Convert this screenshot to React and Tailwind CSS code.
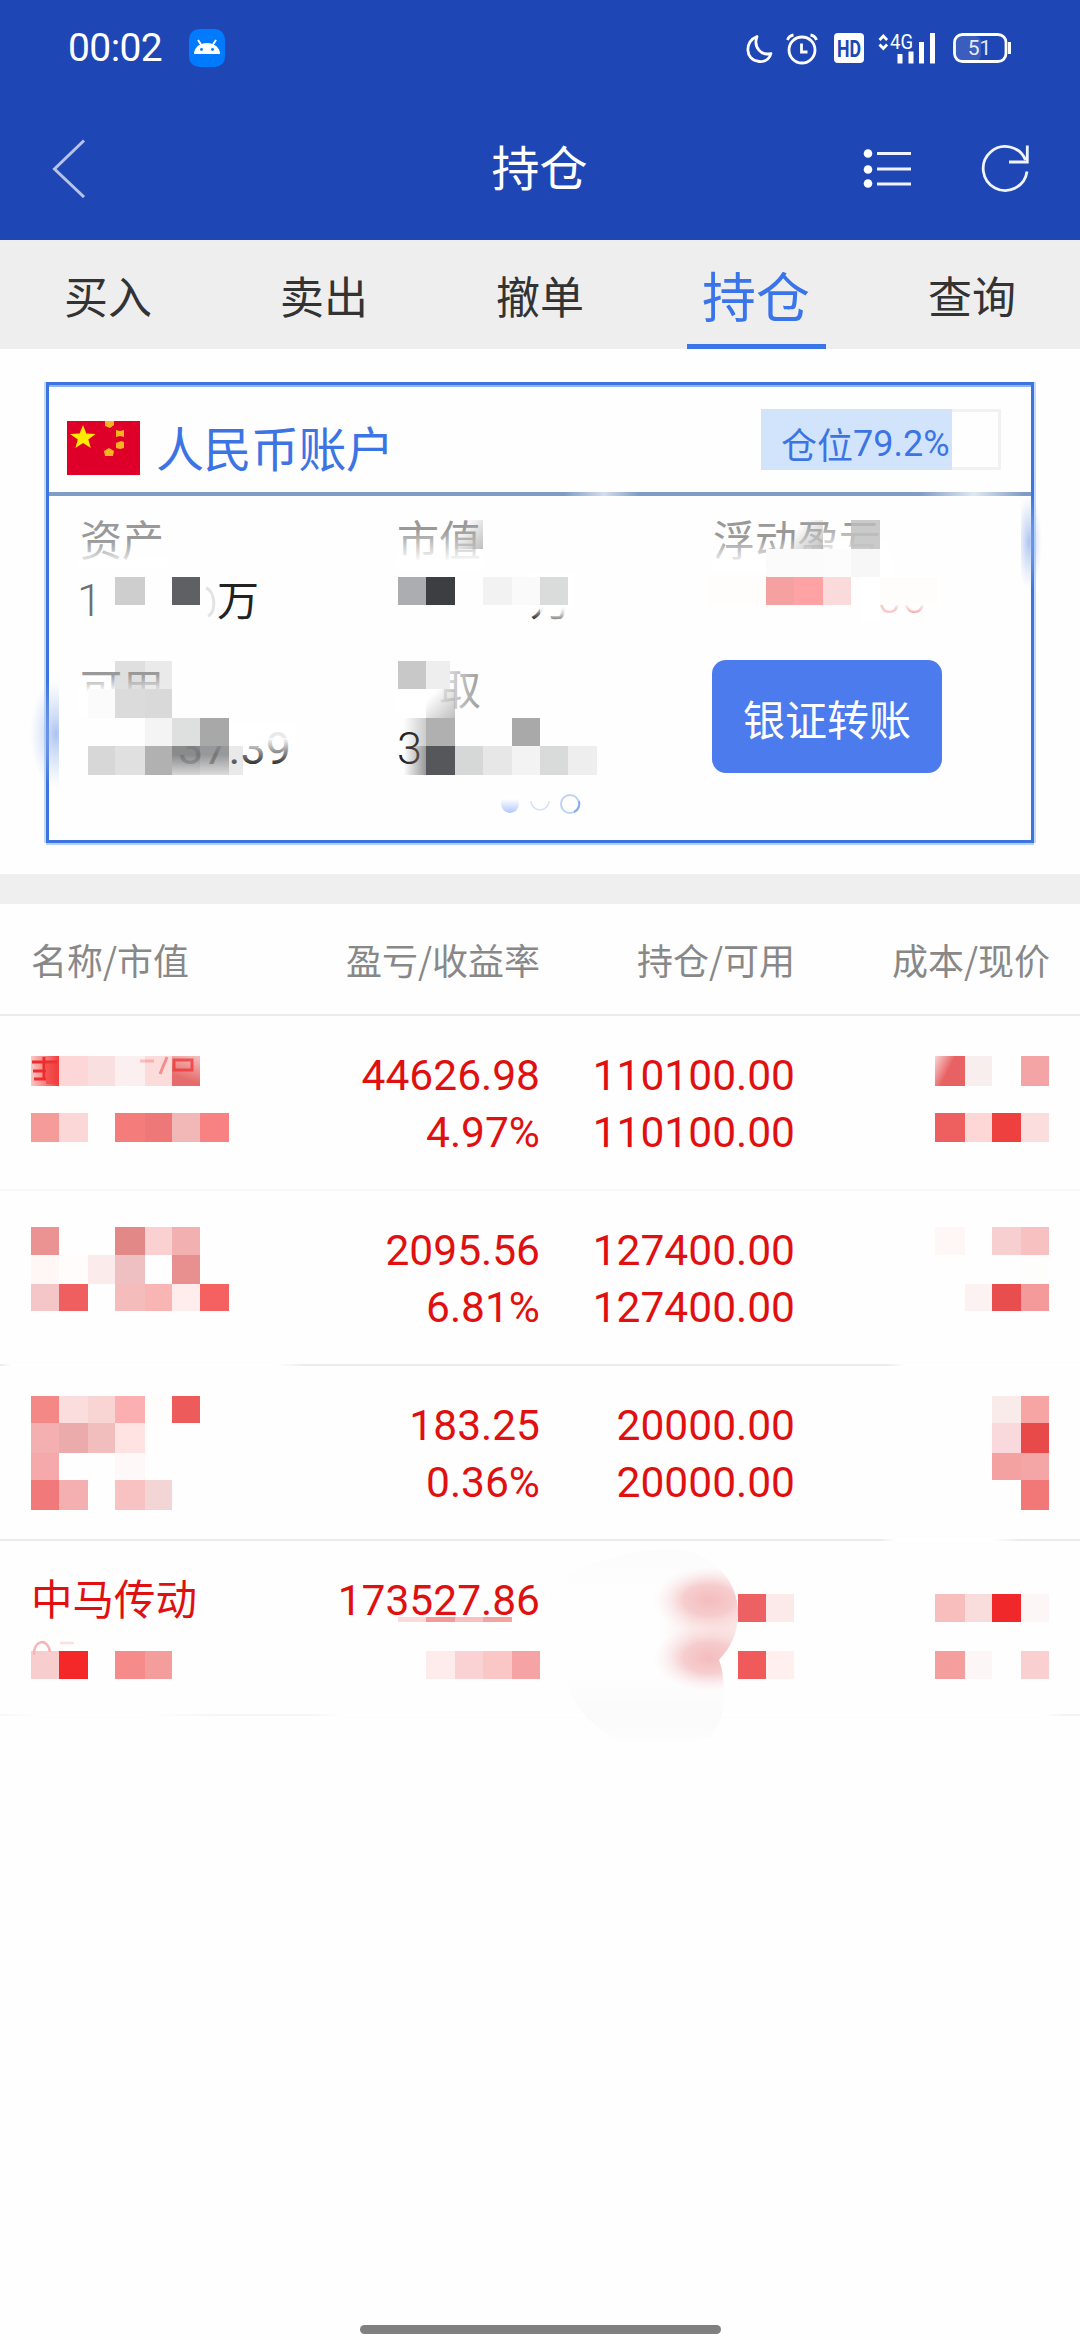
import React from 'react';

const tabs = ['买入', '卖出', '撤单', '持仓', '查询'];

const holdings = [
  { name: '', profit: '44626.98', rate: '4.97%', total: '110100.00', usable: '110100.00', line: 'bg-[#f8f8f8]' },
  { name: '', profit: '2095.56', rate: '6.81%', total: '127400.00', usable: '127400.00', line: 'bg-[linear-gradient(90deg,#ebebeb_0,#fff_12px,#fff_278px,#ebebeb_305px,#ebebeb_885px,#fff_905px)]' },
  { name: '', profit: '183.25', rate: '0.36%', total: '20000.00', usable: '20000.00', line: 'bg-[linear-gradient(90deg,#ebebeb_0,#ebebeb_880px,#fff_895px,#fff_992px,#ebebeb_1020px)]' },
  { name: '中马传动', profit: '173527.86', rate: '', total: '', usable: '', line: 'bg-[linear-gradient(90deg,#f7f7f7_0,#fff_38px,#fff_145px,#f5f5f5_220px,#f5f5f5_310px,#fff_345px,#fff_1043px,#f3f3f3_1065px)]' },
];

// column and row edges of the privacy mosaic, [x, y, w, h, color]
const cardTiles = [
  [115, 577, 30, 28, '#cecece'], [172, 577, 28, 28, '#5f6064'],
  [398, 577, 28, 28, '#acadb0'], [426, 577, 29, 28, '#3d3e42'],
  [483, 577, 29, 28, '#f2f2f2'], [512, 577, 28, 28, '#fafafa'], [540, 577, 28, 28, '#dadcdb'],
  [709, 577, 57, 28, '#fffdfc'], [766, 577, 28, 28, '#f5a0a1'], [794, 577, 29, 28, '#ffa2a3'], [823, 577, 28, 28, '#fadada'],
  [880, 577, 57, 28, '#fffdfc'],
  [823, 549, 28, 28, '#fcfcfc'], [766, 549, 57, 28, '#fbfbfb'], [851, 549, 29, 28, '#f7f7f7'],
  [88, 689, 27, 29, '#fbfbfb'], [115, 689, 30, 29, '#dbdbdb'], [145, 689, 27, 29, '#d9d9d9'],
  [145, 718, 27, 28, '#f4f4f4'], [172, 718, 28, 28, '#dde0df'], [200, 718, 29, 28, '#a8a8a8'],
  [88, 746, 27, 29, '#d7d7d7'], [115, 746, 30, 29, '#e0e0e0'], [145, 746, 27, 29, '#b1b1b1'],
  [398, 661, 28, 28, '#c8c8c8'],
  [426, 718, 29, 28, '#b0b0b0'], [512, 718, 28, 28, '#a9a9a9'],
  [426, 746, 29, 29, '#56575b'], [455, 746, 28, 29, '#d5d8d6'], [483, 746, 29, 29, '#e7e7e7'],
  [512, 746, 28, 29, '#f3f3f3'], [540, 746, 28, 29, '#d9dbda'], [568, 746, 29, 29, '#eeeeee'],
];

const listTiles = [
  [31, 1056, 28, 30, 'url(#nameFade)'], [59, 1056, 29, 30, '#fdd7d7'], [88, 1056, 27, 30, '#f9dfdf'], [115, 1056, 30, 30, '#fcefef'], [145, 1056, 27, 30, '#fcdcdb'], [172, 1056, 28, 30, 'url(#tailFade)'],
  [31, 1113, 28, 29, '#f59c9b'], [59, 1113, 29, 29, '#fbd8d7'], [115, 1113, 30, 29, '#f47d7c'], [145, 1113, 27, 29, '#ee7777'], [172, 1113, 28, 29, '#f2b8b7'], [200, 1113, 29, 29, '#f78281'],
  [935, 1056, 30, 30, 'url(#priceFade)'], [965, 1056, 27, 30, '#f9eeee'], [1021, 1056, 28, 30, '#f5a4a5'],
  [935, 1113, 30, 29, '#ee5f60'], [965, 1113, 27, 29, '#fcd7d6'], [992, 1113, 29, 29, '#ee413f'], [1021, 1113, 28, 29, '#fbdddd'],
  [31, 1227, 28, 28, '#eb9292'], [115, 1227, 30, 28, '#e28988'], [145, 1227, 27, 28, '#fad0d0'], [172, 1227, 28, 28, '#f3b0b1'],
  [31, 1255, 28, 29, '#fff6f6'], [59, 1255, 29, 29, '#fffcfb'], [88, 1255, 27, 29, '#fbebea'], [115, 1255, 30, 29, '#eec0c1'], [172, 1255, 28, 29, '#e7908f'],
  [31, 1284, 28, 27, '#f5c6c7'], [59, 1284, 29, 27, '#f05f5f'], [115, 1284, 30, 27, '#f5bcbc'], [145, 1284, 27, 27, '#f8b5b4'], [172, 1284, 28, 27, '#ffecec'], [200, 1284, 29, 27, '#f56061'],
  [935, 1227, 30, 28, '#fff6f6'], [992, 1227, 29, 28, '#f8cfd0'], [1021, 1227, 28, 28, '#f7c1c2'], [1021, 1255, 28, 29, '#fdfdfb'],
  [965, 1284, 27, 27, '#fbf2f1'], [992, 1284, 29, 27, '#e94e4e'], [1021, 1284, 28, 27, '#f49a9a'],
  [31, 1396, 28, 27, '#f48887'], [59, 1396, 29, 27, '#fbdddd'], [88, 1396, 27, 27, '#f8d4d3'], [115, 1396, 30, 27, '#fbafb0'], [145, 1396, 27, 27, '#fefdfb'], [172, 1396, 28, 27, '#ed5b5b'],
  [31, 1423, 28, 30, '#f4b0b1'], [59, 1423, 29, 30, '#ebabab'], [88, 1423, 27, 30, '#f1bdbd'], [115, 1423, 30, 30, '#ffe3e2'],
  [31, 1453, 28, 27, '#f5a9aa'], [115, 1453, 30, 27, '#fff8f8'],
  [31, 1480, 28, 30, '#f27979'], [59, 1480, 29, 30, '#f4b0b1'], [115, 1480, 30, 30, '#f8c1c2'], [145, 1480, 27, 30, '#f4d5d6'],
  [992, 1396, 29, 27, '#f9ebea'], [1021, 1396, 28, 27, '#f6a4a4'], [992, 1423, 29, 30, '#f9d9db'], [1021, 1423, 28, 30, '#e84a4a'],
  [992, 1453, 29, 27, '#f4a1a2'], [1021, 1453, 28, 27, '#f4a6a6'], [1021, 1480, 28, 30, '#f27777'],
  [31, 1651, 28, 28, '#f8cdce'], [59, 1651, 29, 28, '#f52829'], [115, 1651, 30, 28, '#f58b8b'], [145, 1651, 27, 28, '#f49d9d'],
  [426, 1651, 29, 28, '#feebeb'], [455, 1651, 28, 28, '#fbd2d3'], [483, 1651, 29, 28, '#fbc6c6'], [512, 1651, 28, 28, '#f5a3a5'],
  [738, 1594, 28, 28, '#ee6162'], [766, 1594, 28, 28, '#fceaea'], [738, 1651, 28, 28, '#f15a5b'], [766, 1651, 28, 28, '#ffefef'],
  [935, 1594, 30, 28, '#f8bebe'], [965, 1594, 27, 28, '#f9dddd'], [992, 1594, 29, 28, '#f12829'], [1021, 1594, 28, 28, '#fcf6f6'],
  [935, 1651, 30, 28, '#f59e9e'], [965, 1651, 27, 28, '#fdf6f6'], [1021, 1651, 28, 28, '#facfd0'],
];

const Tiles = ({ data }) => (
  <g shapeRendering="crispEdges">
    {data.map(([x, y, w, h, fill]) => (
      <rect key={`${x}-${y}`} x={x} y={y} width={w} height={h} fill={fill} />
    ))}
  </g>
);

const StatusBar = () => (
  <div className="flex h-[96px] items-center justify-between pl-[68px] pr-[68px]">
    <div className="flex items-center">
      <span className="w-[121px] text-[39px] leading-none tracking-[-0.6px] font-[Roboto,sans-serif]">00:02</span>
      <svg width="36" height="38" viewBox="0 0 36 38">
        <rect width="36" height="38" rx="10" fill="#007bff" />
        <path d="M5 25c0-6 5-11 13-11s13 5 13 11z" fill="#fff" />
        <path d="M9 11l4 6M27 11l-4 6" stroke="#fff" strokeWidth="2" />
        <circle cx="12.5" cy="20.5" r="1.4" fill="#007bff" />
        <circle cx="23.5" cy="20.5" r="1.4" fill="#007bff" />
      </svg>
    </div>
    <svg width="268" height="34" viewBox="744 31 268 34" fill="none" stroke="#fff" strokeWidth="2.8">
      <path d="M757 36.500C744.500 41 744.500 60 759 61.500C765 62 769.500 59 771 53.500C761.500 56 753 47.500 757 36.500Z" strokeLinejoin="round" />
      <circle cx="802" cy="50" r="13" />
      <path d="M801.500 43.500v8.500h6" />
      <path d="M787.500 40c1-3 3-4.500 6-5M816.500 40c-1-3-3-4.500-6-5" />
      <rect x="834" y="33" width="30" height="30" rx="4" fill="#fff" stroke="none" />
      <text x="849" y="56.500" textAnchor="middle" textLength="24" lengthAdjust="spacingAndGlyphs" fontSize="23" fontWeight="700" fontFamily="Roboto, sans-serif" fill="#1e46b4" stroke="none">HD</text>
      <path d="M879.500 40l3.800-4 3.800 4M879.500 44.500l3.800 4 3.800-4" strokeWidth="2.800" />
      <text x="890" y="48.500" textLength="23" lengthAdjust="spacingAndGlyphs" fontSize="20" fontFamily="Roboto, sans-serif" fill="#fff" stroke="none">4G</text>
      <path d="M900 54v9.500M911 51.500v12M921.500 42v21.500M932.500 33v30.500" strokeWidth="5" />
      <rect x="956" y="36" width="25" height="25" rx="6" fill="#fff" fillOpacity="0.13" stroke="none" />
      <rect x="954.500" y="34.500" width="51.500" height="27" rx="8" />
      <path d="M1009.500 42v12" strokeWidth="3" />
      <text x="979.500" y="55" textAnchor="middle" fontSize="21" fontFamily="Roboto, sans-serif" fill="#fff" fillOpacity="0.9" stroke="none">51</text>
    </svg>
  </div>
);

const NavBar = () => (
  <div className="flex h-[144px] items-center justify-between pl-[51px] pr-[50px]">
    <svg className="w-[165px]" height="60" viewBox="0 0 165 60" fill="none">
      <path d="M33 2.500L3.500 31L33 59" stroke="#b7c3e6" strokeWidth="3" />
    </svg>
    <h1 className="pb-[6px] text-[48px] leading-none">持仓</h1>
    <svg width="167" height="56" viewBox="863 140 167 56" fill="none" stroke="#f2f4fb" strokeWidth="2.800">
      <g fill="#fff" stroke="none">
        <circle cx="868" cy="153.500" r="4.300" />
        <circle cx="868" cy="169.500" r="4.300" />
        <circle cx="868" cy="183.500" r="4.300" />
      </g>
      <path d="M877 153.500h34M877 169h34M877 184h34" />
      <path d="M1027 171.500A22 22 0 1 1 1025.500 160" />
      <path d="M1027.300 145.500V162H1009" />
    </svg>
  </div>
);

const TabBar = () => (
  <div className="flex h-[109px] bg-[#eeeeee]">
    {tabs.map((tab) => (
      <div key={tab} className="flex flex-1 flex-col items-center text-[#333]">
        {tab === '持仓' ? (
          <>
            <span className="flex h-[104px] items-center pt-[6px] text-[54px] leading-none text-[#3a74ea]">{tab}</span>
            <span className="h-[5px] w-[139px] bg-[#3a74ea]" />
          </>
        ) : (
          <span className="flex h-[104px] items-center pt-[6px] text-[44px] leading-none">{tab}</span>
        )}
      </div>
    ))}
  </div>
);

const Flag = () => (
  <svg width="73" height="54" viewBox="0 0 73 54">
    <rect width="73" height="54" fill="#de0029" />
    <path d="M16 4l3.300 8.600 9.200.3-7.200 5.600 2.500 8.600-7.800-5-7.600 5 2.400-8.600L3 12.900l9.600-.3z" fill="#ffea00" />
    <g fill="#f5b51e">
      <path d="M38 0h9v4l-4 3-5-2z" />
      <path d="M49 9l4 1 4-1v7l-4-1-4 1z" />
      <path d="M49 22l5-2 3 1v6l-4 1-4-1z" />
      <path d="M37 30l5-3 5 3-1 5h-8z" />
    </g>
  </svg>
);

const AccountCard = () => (
  <section className="relative mx-auto mt-[33px] h-[461px] w-[988px] border-[3px] border-[#3d74e0] shadow-[-2px_0_#c0dcf9,2px_0_#c0dcf9,0_2px_#b5d0f5,inset_0_2px_#8fb2f3]">
    <div className="flex h-[107px] items-center justify-between pl-[18px] pr-[30px] text-[#3d74e4]">
      <div className="flex items-center gap-[16px] pt-[19px]">
        <Flag />
        <span className="pb-[4px] text-[48px] leading-[50px] tracking-[-0.500px]">人民币账户</span>
      </div>
      <div className="mt-[2px] h-[61px] w-[240px] border-[3px] border-l-0 border-[#f1f1f1]">
        <div className="-mt-[3px] flex h-[61px] w-[191px] items-center bg-[#d1e4fc] pl-[20px] pt-[6px] text-[36px] leading-none whitespace-nowrap">
          仓位<span className="pt-[2px] font-[Roboto,sans-serif]">79.2%</span>
        </div>
      </div>
    </div>
    <div className="h-[4px] bg-[linear-gradient(90deg,#7d9cc6_515px,#d4deed_555px,#7d9cc6_590px,#7d9cc6_870px,#e0e8f2_925px,#7d9cc6_975px)]" />
    <div className="grid grid-cols-[317px_318px_1fr] pl-[31px] text-[42px] leading-[60px] text-[#999]">
      <div className="h-[139px] pt-[12px]">
        <p>资产</p>
        <p className="text-[#222]"><span className="-ml-[3px] font-[Roboto,sans-serif] text-[45px] font-light">1</span><span className="ml-[115px]">万</span></p>
      </div>
      <div className="h-[139px] pt-[12px]">
        <p>市值</p>
        <p className="pl-[133px] text-[#222]">万</p>
      </div>
      <div className="h-[139px] pt-[12px]">
        <p className="-ml-[2px]">浮动盈亏</p>
        <p className="pl-[162px] font-[Roboto,sans-serif] text-[45px] font-light text-[#ee4a4a]">00</p>
      </div>
      <div className="pt-[22px]">
        <p>可用</p>
        <p className="pt-[2px] pl-[98px] font-[Roboto,sans-serif] text-[45px] text-[#222]">37.39</p>
      </div>
      <div className="pt-[22px]">
        <p>可取</p>
        <p className="pt-[2px] font-[Roboto,sans-serif] text-[45px] font-light text-[#222]">3</p>
      </div>
      <div className="pt-[25px]">
        <button className="-ml-[3px] h-[113px] w-[230px] rounded-[14px] bg-[#4b7bec] pt-[3px] text-[42px] leading-none text-white">银证转账</button>
      </div>
    </div>
    <CardMask />
  </section>
);

// privacy mosaic over the amounts
const CardMask = () => (
  <svg className="pointer-events-none absolute -top-[3px] -left-[49px]" width="1080" height="463" viewBox="0 382 1080 463">
    <defs>
      <linearGradient id="veilDown" x1="0" y1="0" x2="0" y2="1">
        <stop offset="0" stopColor="#fff" stopOpacity="0" />
        <stop offset="1" stopColor="#fff" />
      </linearGradient>
      <linearGradient id="veilUp" x1="0" y1="1" x2="0" y2="0">
        <stop offset="0" stopColor="#fff" stopOpacity="0" />
        <stop offset="1" stopColor="#fff" />
      </linearGradient>
      <linearGradient id="veilLeft" x1="1" y1="0" x2="0" y2="0">
        <stop offset="0" stopColor="#fff" stopOpacity="0" />
        <stop offset="1" stopColor="#fff" stopOpacity="0.85" />
      </linearGradient>
      <linearGradient id="greyDown" x1="0" y1="0" x2="1" y2="1">
        <stop offset="0.2" stopColor="#aaa" stopOpacity="0" />
        <stop offset="1" stopColor="#aaa" stopOpacity="0.75" />
      </linearGradient>
      <linearGradient id="darkUp" x1="0" y1="0" x2="0" y2="1">
        <stop offset="0.3" stopColor="#757678" />
        <stop offset="1" stopColor="#d0d0d0" />
      </linearGradient>
      <linearGradient id="threeFade" x1="0" y1="0" x2="1" y2="0">
        <stop offset="0.2" stopColor="#777" stopOpacity="0" />
        <stop offset="1" stopColor="#777" stopOpacity="0.75" />
      </linearGradient>
      <linearGradient id="dotFill" x1="0" y1="0" x2="0" y2="1">
        <stop offset="0.2" stopColor="#fff" />
        <stop offset="1" stopColor="#b3c9fa" />
      </linearGradient>
      <radialGradient id="edgeGlow">
        <stop offset="0" stopColor="#8aabea" stopOpacity="0.7" />
        <stop offset="1" stopColor="#b4c9f2" stopOpacity="0" />
      </radialGradient>
      <clipPath id="leftEdge"><rect x="28" y="660" width="31" height="140" /></clipPath>
      <clipPath id="rightEdge"><rect x="1021" y="490" width="30" height="110" /></clipPath>
    </defs>

    {/* labels and amounts fading into white */}
    <rect x="78" y="540" width="90" height="28" fill="url(#veilDown)" />
    <rect x="395" y="530" width="90" height="32" fill="url(#veilDown)" />
    <rect x="395" y="562" width="90" height="8" fill="#fff" />
    <rect x="712" y="538" width="82" height="28" fill="url(#veilDown)" />
    <rect x="712" y="566" width="82" height="6" fill="#fff" />
    <rect x="794" y="523" width="96" height="34" fill="url(#veilDown)" />
    <rect x="784" y="557" width="110" height="18" fill="#fff" />
    <rect x="78" y="578" width="26" height="44" fill="#fff" fillOpacity="0.35" />
    <path d="M206 588c9 3 11 24 2 28" stroke="#e3e3e3" strokeWidth="3" fill="none" />
    <rect x="529" y="572" width="45" height="34" fill="#fff" />
    <rect x="529" y="604" width="45" height="16" fill="url(#veilUp)" />
    <rect x="860" y="575" width="80" height="30" fill="#fff" />
    <rect x="860" y="603" width="36" height="18" fill="#fff" fillOpacity="0.7" />
    <rect x="896" y="603" width="36" height="22" fill="url(#veilUp)" />
    <rect x="78" y="692" width="90" height="26" fill="#fff" />
    <rect x="78" y="674" width="90" height="18" fill="url(#veilDown)" />
    <rect x="395" y="668" width="41" height="45" fill="#fff" />
    <rect x="436" y="668" width="46" height="48" fill="url(#veilLeft)" />
    <rect x="172" y="722" width="57" height="24" fill="#fff" />
    <rect x="229" y="722" width="36" height="24" fill="#fff" />
    <rect x="265" y="722" width="30" height="16" fill="#fff" fillOpacity="0.9" />
    <rect x="172" y="738" width="125" height="28" fill="url(#veilUp)" />

    <Tiles data={cardTiles} />
    <g shapeRendering="crispEdges">
      <rect x="455" y="520" width="28" height="29" fill="url(#greyDown)" />
      <rect x="794" y="520" width="29" height="29" fill="url(#greyDown)" />
      <rect x="851" y="520" width="29" height="29" fill="#bdbdbd" fillOpacity="0.8" />
      <rect x="540" y="605" width="28" height="25" fill="url(#veilUp)" />
      <rect x="115" y="661" width="30" height="28" fill="#999" fillOpacity="0.3" />
      <rect x="145" y="661" width="27" height="28" fill="#999" fillOpacity="0.2" />
      <rect x="172" y="746" width="28" height="29" fill="url(#darkUp)" fillOpacity="0.85" />
      <rect x="200" y="746" width="29" height="29" fill="url(#darkUp)" fillOpacity="0.75" />
      <rect x="229" y="746" width="14" height="29" fill="#aaa" fillOpacity="0.25" />
      <rect x="426" y="661" width="24" height="28" fill="#eee" />
      <rect x="426" y="689" width="29" height="29" fill="url(#greyDown)" />
      <rect x="398" y="718" width="28" height="28" fill="url(#threeFade)" fillOpacity="0.5" />
      <rect x="398" y="746" width="28" height="29" fill="url(#threeFade)" />
    </g>

    <circle cx="510" cy="804" r="9" fill="url(#dotFill)" />
    <path d="M531 801a9 9 0 1 0 18 0" fill="none" stroke="#d9e3f5" strokeWidth="1.500" />
    <circle cx="570" cy="804" r="9" fill="none" stroke="#bdd3f2" strokeWidth="2" />
    <path d="M579 801a9 9 0 0 1-5 11" fill="none" stroke="#86abe6" strokeWidth="2" />

    <ellipse cx="56" cy="734" rx="26" ry="54" fill="url(#edgeGlow)" clipPath="url(#leftEdge)" />
    <ellipse cx="1029" cy="542" rx="13" ry="48" fill="url(#edgeGlow)" clipPath="url(#rightEdge)" />
  </svg>
);

const HoldingsMask = () => (
  <svg className="pointer-events-none absolute top-0 left-0" width="1080" height="860" viewBox="0 904 1080 860">
    <defs>
      <linearGradient id="nameFade" x1="0" y1="0" x2="1" y2="0">
        <stop offset="0" stopColor="#fac8c8" />
        <stop offset="1" stopColor="#f53a3a" />
      </linearGradient>
      <linearGradient id="tailFade" x1="0.800" y1="0" x2="0.500" y2="1">
        <stop offset="0" stopColor="#f3bcbc" />
        <stop offset="0.800" stopColor="#e66b6c" />
      </linearGradient>
      <linearGradient id="priceFade" x1="0" y1="0" x2="1" y2="0.500">
        <stop offset="0" stopColor="#fbd5d5" />
        <stop offset="0.550" stopColor="#e86263" />
      </linearGradient>
      <radialGradient id="pinkBlob">
        <stop offset="0" stopColor="#f4bcbd" />
        <stop offset="0.450" stopColor="#f5c6c7" stopOpacity="0.850" />
        <stop offset="1" stopColor="#fbe9e9" stopOpacity="0" />
      </radialGradient>
      <linearGradient id="smudge" x1="0" y1="0" x2="0" y2="1">
        <stop offset="0" stopColor="#fbfbfb" />
        <stop offset="0.250" stopColor="#fefefe" />
        <stop offset="0.650" stopColor="#fefefe" />
        <stop offset="0.850" stopColor="#fafafa" />
        <stop offset="1" stopColor="#fefefe" />
      </linearGradient>
      <clipPath id="smudgeEdge">
        <path d="M585 1566C620 1556 635 1550 675 1549C714 1552 738 1582 738 1612C738 1637 728 1650 719 1660C727 1680 727 1725 708 1738C680 1744 640 1745 612 1738C590 1722 574 1708 568 1684C540 1650 540 1600 570 1575Z" />
      </clipPath>
    </defs>
    <Tiles data={listTiles} />
    {/* leftovers of the first stock name */}
    <g stroke="#ee2c2c" strokeWidth="3" fill="none">
      <path d="M32 1062h25M44 1057v22M33 1071h13M34 1079h12" />
      <path d="M46 1062h12v22h-12z" fill="#f03a3a" fillOpacity="0.6" stroke="none" />
      <path d="M174 1060h18v10h-18z" strokeOpacity="0.700" />
      <path d="M167 1057l-7 17" strokeOpacity="0.450" />
      <path d="M140 1061h14" strokeOpacity="0.250" />
    </g>
    <path d="M34 1655c-1-15 14-18 16-3" fill="none" stroke="#f7b5b5" strokeWidth="2.500" />
    <path d="M60 1643h14" stroke="#fbe2e2" strokeWidth="2.500" />
    <g shapeRendering="crispEdges">
      <rect x="398" y="1617" width="28" height="5" fill="#fbdada" />
      <rect x="426" y="1617" width="29" height="5" fill="#f39a9a" />
      <rect x="455" y="1617" width="28" height="5" fill="#f8c0c0" />
      <rect x="483" y="1617" width="29" height="5" fill="#f4a2a2" />
    </g>
    <g clipPath="url(#smudgeEdge)">
      <rect x="540" y="1540" width="200" height="210" fill="url(#smudge)" />
      <ellipse cx="720" cy="1628" rx="62" ry="62" fill="url(#pinkBlob)" fillOpacity="0.450" />
      <ellipse cx="709" cy="1600" rx="56" ry="34" fill="url(#pinkBlob)" />
      <ellipse cx="709" cy="1658" rx="56" ry="34" fill="url(#pinkBlob)" />
    </g>
  </svg>
);

const Holdings = () => (
  <section className="relative">
    <div className="grid h-[110px] grid-cols-[229px_280px_255px_255px] items-center pl-[31px] text-[36px] leading-none text-[#888]">
      <span>名称/市值</span>
      <span className="text-right">盈亏/收益率</span>
      <span className="text-right">持仓/可用</span>
      <span className="text-right">成本/现价</span>
    </div>
    <div className="h-[2px] bg-[#ebebeb]" />
    {holdings.map((row) => (
      <div key={row.profit}>
        <div className="grid h-[173px] grid-cols-[229px_280px_255px_254px] pl-[31px] pt-[31px] text-[42.5px] leading-[57px] text-[#e11010]">
          <span className="-mt-[3px] whitespace-nowrap text-[41.5px]">{row.name}</span>
          <div className="text-right font-[Roboto,sans-serif]">
            <p>{row.profit}</p>
            <p>{row.rate}</p>
          </div>
          <div className="text-right font-[Roboto,sans-serif]">
            <p>{row.total}</p>
            <p>{row.usable}</p>
          </div>
        </div>
        <div className={`h-[2px] ${row.line}`} />
      </div>
    ))}
    <HoldingsMask />
  </section>
);

export default function App() {
  return (
    <div className="flex h-[2340px] w-[1080px] flex-col overflow-hidden bg-[#fefefe] font-['Noto_Sans_CJK_SC',sans-serif]">
      <header className="h-[240px] bg-[#1e46b4] text-white">
        <StatusBar />
        <NavBar />
      </header>
      <TabBar />
      <AccountCard />
      <div className="mt-[31px] h-[30px] bg-[#efefef]" />
      <Holdings />
      <div className="mx-auto mt-auto mb-[6px] h-[9px] w-[361px] rounded-full bg-[#808080]" />
    </div>
  );
}
